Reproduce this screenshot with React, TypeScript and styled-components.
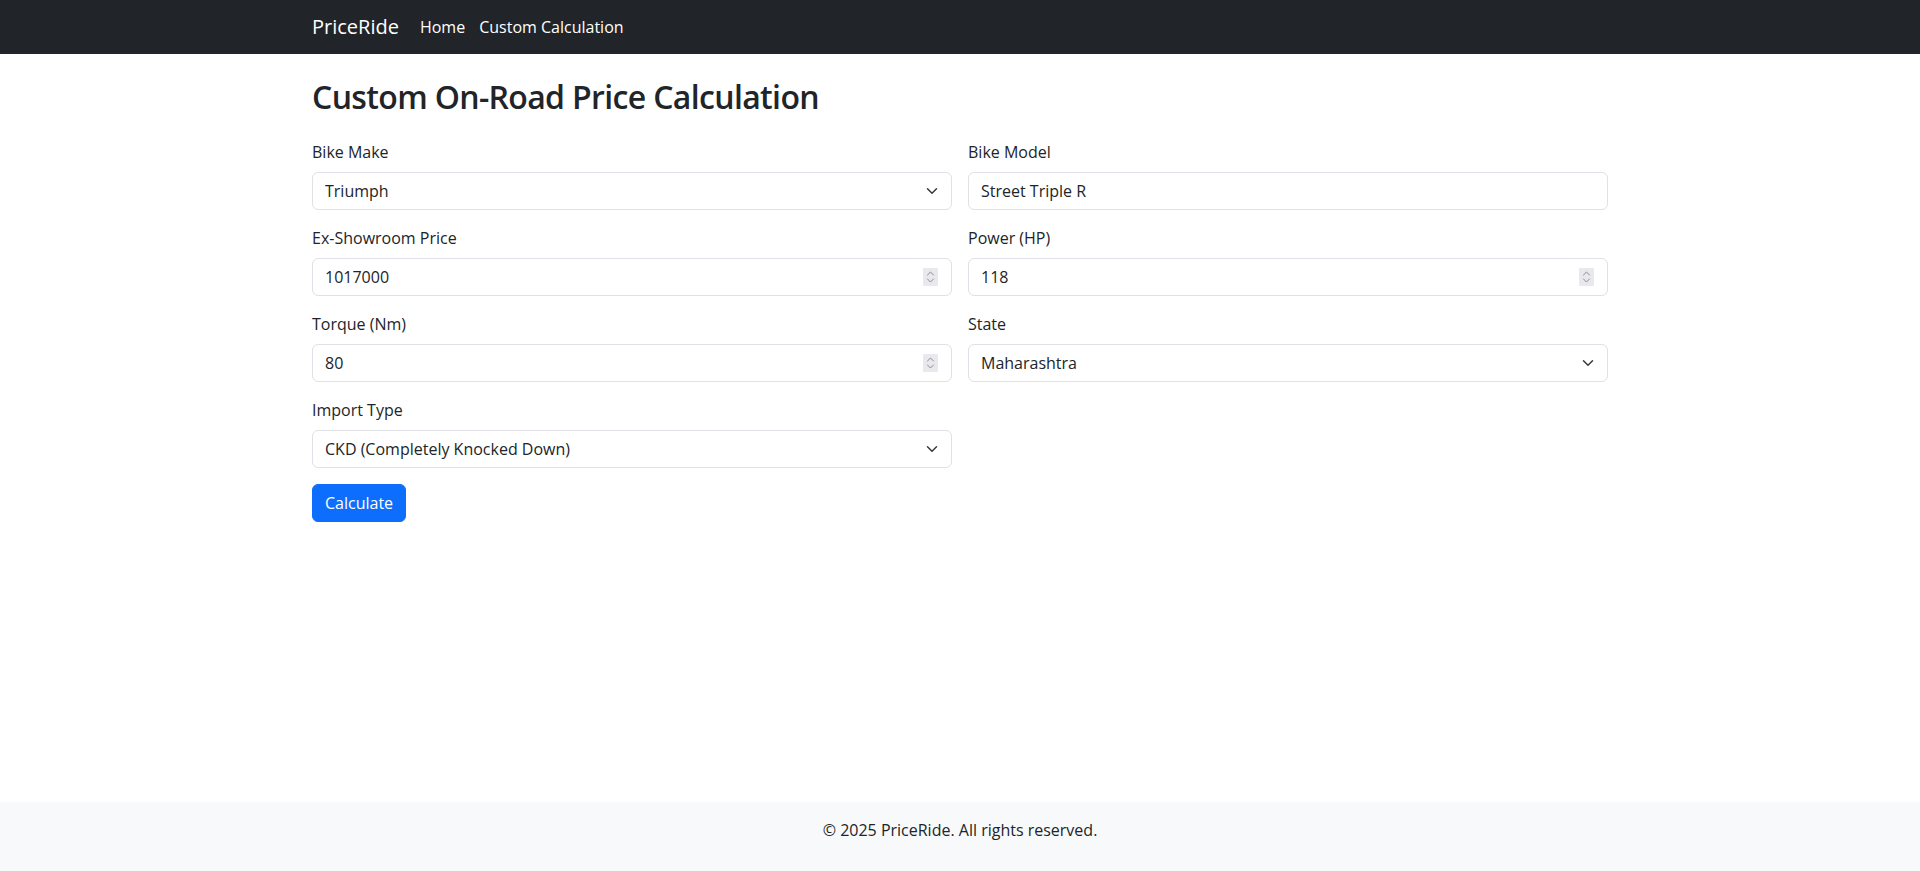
import React, { useState } from "react";
import styled, { createGlobalStyle } from "styled-components";

const GlobalStyle = createGlobalStyle`
  *, *::before, *::after { box-sizing: border-box; }
  html, body { margin: 0; padding: 0; }
  body {
    font-family: "Open Sans", "Noto Sans", sans-serif;
    font-size: 16px;
    line-height: 1.5;
    color: #212529;
    background: #fff;
  }
`;

const Page = styled.div`
  min-height: 100vh;
  display: flex;
  flex-direction: column;
`;

const Navbar = styled.nav`
  background: #212529;
  height: 54px;
  display: flex;
  align-items: center;
`;

const Container = styled.div`
  width: 100%;
  max-width: 1320px;
  margin: 0 auto;
  padding: 0 12px;
`;

const NavInner = styled(Container)`
  display: flex;
  align-items: center;
`;

const Brand = styled.a`
  color: #fff;
  font-size: 20px;
  line-height: 30px;
  margin-right: 14px;
  text-decoration: none;
`;

const NavLinks = styled.div`
  display: flex;
  align-items: center;
`;

const NavLink = styled.a`
  color: #fff;
  font-size: 16px;
  line-height: 24px;
  padding: 8px 7px;
  text-decoration: none;
`;

const Main = styled(Container)`
  flex: 1;
  padding-top: 24px;
`;

const Title = styled.h2`
  font-size: 32px;
  font-weight: 600;
  line-height: 1.2;
  margin: 0 0 24px;
  letter-spacing: -0.65px;
`;

const FormGrid = styled.form`
  display: grid;
  grid-template-columns: 1fr 1fr;
  column-gap: 16px;
  row-gap: 16px;
`;

const Field = styled.div`
  display: flex;
  flex-direction: column;
`;

const Label = styled.label`
  display: block;
  margin-bottom: 8px;
  line-height: 24px;
`;

const controlCss = `
  display: block;
  width: 100%;
  height: 38px;
  padding: 6px 12px;
  font-family: inherit;
  font-size: 16px;
  line-height: 24px;
  color: #212529;
  background: #fff;
  border: 1px solid #dee2e6;
  border-radius: 6px;
  outline: none;
`;

const ControlWrap = styled.div`
  position: relative;
`;

const Input = styled.input`
  ${controlCss}
  -moz-appearance: textfield;
  &::-webkit-inner-spin-button,
  &::-webkit-outer-spin-button {
    -webkit-appearance: none;
    margin: 0;
  }
`;

const Select = styled.select`
  ${controlCss}
  appearance: none;
  -webkit-appearance: none;
  padding-right: 36px;
`;

const Chevron = styled.svg`
  position: absolute;
  right: 12px;
  top: 13px;
  width: 16px;
  height: 12px;
  pointer-events: none;
`;

const Spinner = styled.svg`
  position: absolute;
  right: 14px;
  top: 10px;
  width: 15px;
  height: 18px;
  pointer-events: none;
`;

const ButtonRow = styled.div`
  grid-column: 1 / -1;
`;

const Button = styled.button`
  font-family: inherit;
  font-size: 16px;
  line-height: 24px;
  padding: 6px 12px;
  color: #fff;
  background: #0d6efd;
  border: 1px solid #0d6efd;
  border-radius: 6px;
  cursor: pointer;
`;

const Footer = styled.footer`
  background: #f8f9fa;
  text-align: center;
  padding: 16px 0 29px;
  line-height: 24px;
`;

const ChevronIcon = () => (
  <Chevron viewBox="0 0 16 16">
    <path
      fill="none"
      stroke="#343a40"
      strokeLinecap="round"
      strokeLinejoin="round"
      strokeWidth="2"
      d="m2 5 6 6 6-6"
    />
  </Chevron>
);

const SpinnerIcon = () => (
  <Spinner viewBox="0 0 15 18">
    <rect x="0" y="0" width="15" height="18" rx="1" fill="#e9e9ed" />
    <path
      fill="none"
      stroke="#8a8a94"
      strokeWidth="1"
      strokeLinecap="round"
      strokeLinejoin="round"
      d="M4.5 7 7.5 4 10.5 7 M4.5 11 7.5 14 10.5 11"
    />
  </Spinner>
);

type SelectFieldProps = {
  label: string;
  value: string;
  options: string[];
  onChange: (v: string) => void;
};

const SelectField = ({ label, value, options, onChange }: SelectFieldProps) => (
  <Field>
    <Label>{label}</Label>
    <ControlWrap>
      <Select value={value} onChange={(e) => onChange(e.target.value)}>
        {options.map((o) => (
          <option key={o} value={o}>
            {o}
          </option>
        ))}
      </Select>
      <ChevronIcon />
    </ControlWrap>
  </Field>
);

type InputFieldProps = {
  label: string;
  value: string;
  type?: string;
  onChange: (v: string) => void;
};

const InputField = ({ label, value, type = "text", onChange }: InputFieldProps) => (
  <Field>
    <Label>{label}</Label>
    <ControlWrap>
      <Input type={type} value={value} onChange={(e) => onChange(e.target.value)} />
      {type === "number" && <SpinnerIcon />}
    </ControlWrap>
  </Field>
);

export default function App() {
  const [make, setMake] = useState("Triumph");
  const [model, setModel] = useState("Street Triple R");
  const [price, setPrice] = useState("1017000");
  const [power, setPower] = useState("118");
  const [torque, setTorque] = useState("80");
  const [state, setState] = useState("Maharashtra");
  const [importType, setImportType] = useState("CKD (Completely Knocked Down)");

  return (
    <Page>
      <GlobalStyle />
      <Navbar>
        <NavInner>
          <Brand href="#">PriceRide</Brand>
          <NavLinks>
            <NavLink href="#">Home</NavLink>
            <NavLink href="#">Custom Calculation</NavLink>
          </NavLinks>
        </NavInner>
      </Navbar>
      <Main>
        <Title>Custom On-Road Price Calculation</Title>
        <FormGrid onSubmit={(e) => e.preventDefault()}>
          <SelectField
            label="Bike Make"
            value={make}
            onChange={setMake}
            options={["Triumph", "Honda", "Yamaha", "Kawasaki", "KTM"]}
          />
          <InputField label="Bike Model" value={model} onChange={setModel} />
          <InputField label="Ex-Showroom Price" type="number" value={price} onChange={setPrice} />
          <InputField label="Power (HP)" type="number" value={power} onChange={setPower} />
          <InputField label="Torque (Nm)" type="number" value={torque} onChange={setTorque} />
          <SelectField
            label="State"
            value={state}
            onChange={setState}
            options={["Maharashtra", "Karnataka", "Delhi", "Tamil Nadu"]}
          />
          <SelectField
            label="Import Type"
            value={importType}
            onChange={setImportType}
            options={["CKD (Completely Knocked Down)", "CBU (Completely Built Unit)"]}
          />
          <ButtonRow>
            <Button type="submit">Calculate</Button>
          </ButtonRow>
        </FormGrid>
      </Main>
      <Footer>© 2025 PriceRide. All rights reserved.</Footer>
    </Page>
  );
}
